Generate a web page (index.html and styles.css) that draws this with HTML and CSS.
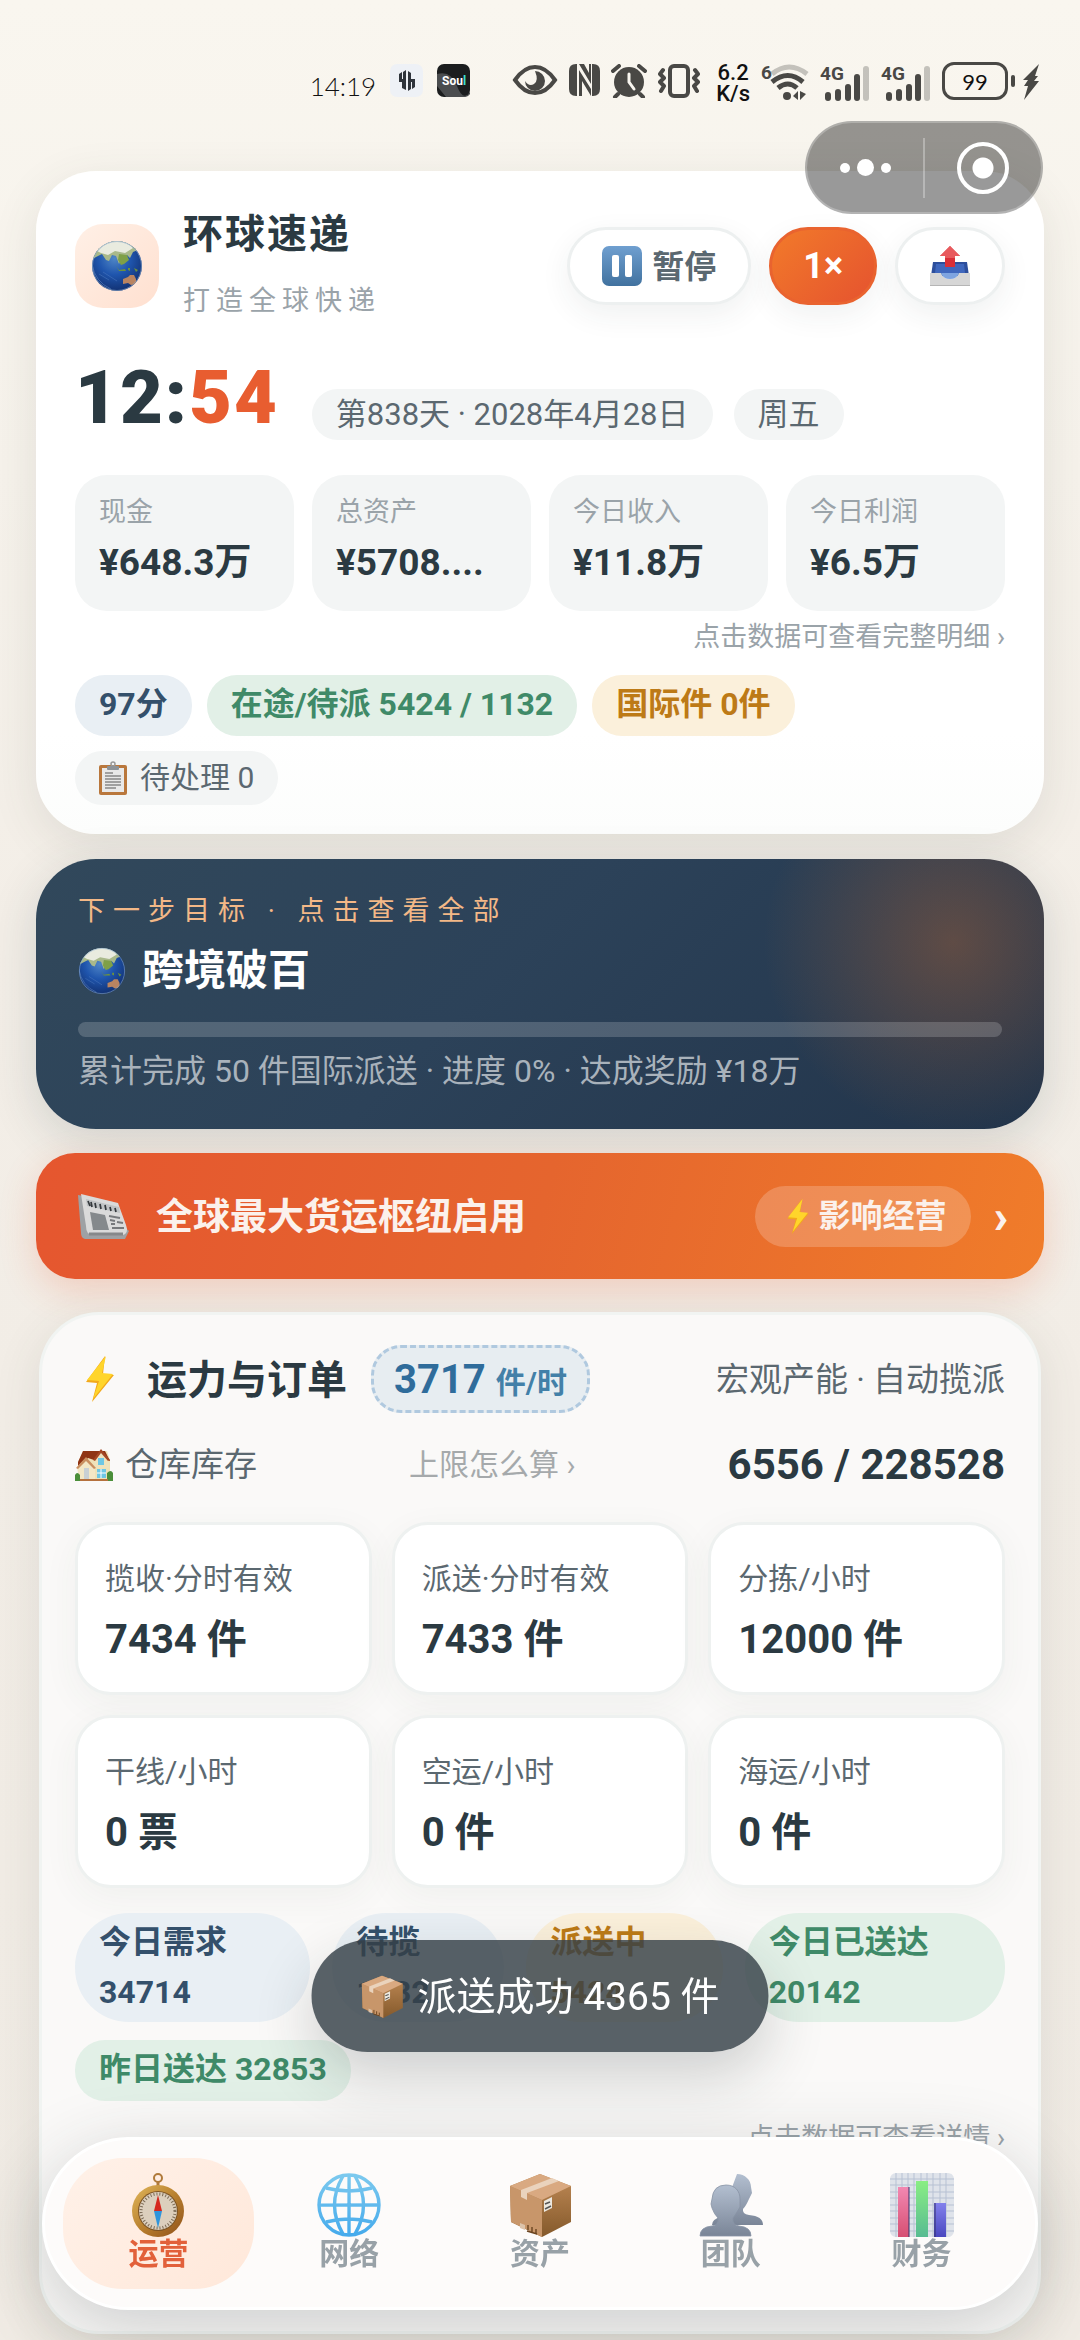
FILE: index.html
```html
<!DOCTYPE html>
<html lang="zh-CN">
<head>
    <meta charset="UTF-8">
    <meta name="viewport" content="width=device-width, initial-scale=1">
    <title>环球速递</title>
    <link rel="stylesheet" href="styles.css">
</head>
<body>
    <svg class="sprite" aria-hidden="true">
        <defs>
            <radialGradient id="sea" cx=".45" cy=".35" r=".65">
                <stop offset="0" stop-color="#4f86c6"/>
                <stop offset=".5" stop-color="#1f55ad"/>
                <stop offset="1" stop-color="#123274"/>
            </radialGradient>
            <linearGradient id="gold" x1="0" y1="0" x2="1" y2="1">
                <stop offset="0" stop-color="#e2b85c"/>
                <stop offset=".5" stop-color="#b9812f"/>
                <stop offset="1" stop-color="#8f501a"/>
            </linearGradient>
            <linearGradient id="sky" x1="0" y1="0" x2="0" y2="1">
                <stop offset="0" stop-color="#7cc9ee"/>
                <stop offset="1" stop-color="#46abec"/>
            </linearGradient>
            <linearGradient id="boxside" x1="0" y1="0" x2="0" y2="1">
                <stop offset="0" stop-color="#c08a56"/>
                <stop offset="1" stop-color="#84592b"/>
            </linearGradient>
            <linearGradient id="person" x1="0" y1="0" x2="0" y2="1">
                <stop offset="0" stop-color="#b3bfd0"/>
                <stop offset="1" stop-color="#7a8597"/>
            </linearGradient>
            <linearGradient id="red" x1="0" y1="0" x2="0" y2="1">
                <stop offset="0" stop-color="#f288b2"/>
                <stop offset="1" stop-color="#d64f72"/>
            </linearGradient>
            <linearGradient id="green" x1="0" y1="0" x2="0" y2="1">
                <stop offset="0" stop-color="#8aee84"/>
                <stop offset="1" stop-color="#57bb92"/>
            </linearGradient>
            <linearGradient id="violet" x1="0" y1="0" x2="0" y2="1">
                <stop offset="0" stop-color="#8280ec"/>
                <stop offset="1" stop-color="#4a48c0"/>
            </linearGradient>
            <linearGradient id="pausebg" x1="0" y1="0" x2="0" y2="1">
                <stop offset="0" stop-color="#6f9fd0"/>
                <stop offset="1" stop-color="#41729f"/>
            </linearGradient>
            <clipPath id="disc"><circle cx="26" cy="26" r="25"/></clipPath>
        </defs>

        <symbol id="earth" viewBox="0 0 52 52">
            <circle cx="26" cy="26" r="25" fill="url(#sea)"/>
            <g clip-path="url(#disc)">
                <path d="M0 10 Q8 0 26 0 Q44 1 47 10 L42 12 39 18 36 15 34 21 31 17 28 24 25 16 21 15 18 21 15 20 11 14 5 17 0 20z" fill="#a9b98a"/>
                <path d="M6 11 Q14 0 28 1 Q38 2 42 8 L34 13 24 11 17 15 10 13z" fill="#e9ebdf"/>
                <path d="M28 14l8 1 2 5-5 4-3 1-3-5z" fill="#7fa047"/>
                <path d="M25 26l3 4 6-1 1 2-7 0z M37 28l2 0 0 3-2-1z M43 28l4 2-2 2z" fill="#6b9040"/>
                <path d="M32 39l5-2 2-2 4 0 2 4 0 5-5 1-3-2-5 1z" fill="#b98461"/>
                <path d="M1 24 Q4 42 20 49" stroke="#5a82c0" stroke-width="1" fill="none" opacity=".6"/>
                <path d="M8 34l10 6M12 32l14 9" stroke="#527fc4" stroke-width=".8" fill="none" opacity=".6"/>
            </g>
            <circle cx="26" cy="26" r="24.5" fill="none" stroke="#8aa9c8" stroke-width="1" opacity=".6"/>
        </symbol>

        <symbol id="bolt" viewBox="0 0 30 46">
            <path d="M20 0L1 26l11 1-5 19L29 19l-11-1z" fill="#f2a91b"/>
            <path d="M21 0L2 24l12 1-6 18L28 18l-11-1z" fill="#ffd52b"/>
        </symbol>

        <symbol id="box" viewBox="0 0 64 64">
            <path d="M2 13L32 1l31 12v36L34 64 3 49z" fill="url(#boxside)"/>
            <path d="M2 13l32 14v37L3 49z" fill="#c8966a"/>
            <path d="M2 13L32 1l31 12-29 14z" fill="#d9a981"/>
            <path d="M13 17L44 5l7 3-32 12v7l-6-3z" fill="#ead3bd"/>
            <path d="M12 50l5 2v5l-5-2z" fill="#dcc3aa"/>
            <path d="M36 28l8-4v11l-8 4z" fill="#ece8df"/>
            <path d="M37 31l5-2M37 36l6-3" stroke="#555" stroke-width="1.5"/>
            <path d="M20 52v5M24 54v5M28 56v4M19 58l10 3" stroke="#6a4420" stroke-width="1.4"/>
        </symbol>

        <symbol id="pause" viewBox="0 0 40 40">
            <rect width="40" height="40" rx="7" fill="url(#pausebg)"/>
            <rect x="10" y="9" width="7" height="22" rx="2" fill="#fff"/>
            <rect x="23" y="9" width="7" height="22" rx="2" fill="#fff"/>
        </symbol>

        <symbol id="outbox" viewBox="0 0 40 40">
            <path d="M3 16h34l2 14H1z" fill="#2d4f9c"/>
            <path d="M6 18h28l1 9H5z" fill="#3f67bd"/>
            <path d="M0 27h11q2 6 9 6t9-6h11v13H0z" fill="#d6d6d6"/>
            <path d="M11 27h18q-2 6-9 6t-9-6z" fill="#7ea4e0"/>
            <path d="M0 39h40v1H0z" fill="#b5b5b5"/>
            <path d="M20 0l10 10h-5v11H15V10h-5z" fill="#d92f38"/>
            <path d="M20 0l10 10h-5v2H15v-2h-5z" fill="#e85a5e"/>
        </symbol>

        <symbol id="clipboard" viewBox="0 0 28 34">
            <rect x="0" y="4" width="28" height="30" rx="2" fill="#b9773c"/>
            <rect x="3" y="7" width="22" height="24" fill="#e9e9e9"/>
            <circle cx="14" cy="3" r="2" fill="none" stroke="#999" stroke-width="1.5"/>
            <rect x="8" y="5" width="12" height="4" rx="1" fill="#8d9398"/>
            <path d="M6 12h8M6 15h16M6 18h16M6 21h16M6 24h16M6 27h11" stroke="#888" stroke-width="1.3"/>
        </symbol>

        <symbol id="news" viewBox="0 0 52 46">
            <path d="M1 2L36 9l6 20 10 9-4 8H8Q4 45 4 40z" fill="#9ea1a4"/>
            <path d="M4 1l37 9 8 22q3 8-3 10H16q-7 0-7-9z" fill="#dadada"/>
            <path d="M9 6l33 8 1 6L10 13z" fill="#bfc2c4"/>
            <path d="M11 8l2 5M14 9l1 5M18 10l1 5M23 11l1 5M28 12l1 5M33 14l1 4M38 15l1 4" stroke="#34383c" stroke-width="1.7"/>
            <path d="M13 19l15 3 4 15H16z" fill="#85898c"/>
            <path d="M32 23l11 2M33 27l5 1M34 31l4 0M35 35l12 0M40 29l6 1" stroke="#77797c" stroke-width="1.8"/>
            <path d="M12 41h34" stroke="#86888a" stroke-width="3"/>
        </symbol>

        <symbol id="house" viewBox="0 0 38 32">
            <path d="M3 13L8 2h24l3 9v19H4z" fill="#efe2b8"/>
            <path d="M3 13L8 2h22l5 10H22L13 9 3 19z" fill="#8f3414"/>
            <path d="M19 11l7-10 8 10v8H20z" fill="#f0e3bc"/>
            <path d="M18 11l8-11 9 11-2 1-7-8-6 8z" fill="#a54724"/>
            <path d="M2 18l9-9 9 9v12H4z" fill="#f3e7c6"/>
            <path d="M1 19l10-11 10 11-2 1-8-8-8 8z" fill="#c98f60"/>
            <rect x="23" y="9" width="6" height="7" fill="#6fc7e4"/>
            <rect x="22" y="20" width="9" height="9" fill="#6fc7e4"/>
            <rect x="9" y="19" width="5" height="11" fill="#c9d0d4"/>
            <path d="M26 20v9M22 24h9" stroke="#fff" stroke-width="1"/>
            <path d="M0 32v-6q2-4 5 0v4h27v-6q4-4 6 0v8z" fill="#4b8f3a"/>
            <path d="M5 30h28v2H5z" fill="#b5713e"/>
        </symbol>

        <symbol id="compass" viewBox="0 0 64 64">
            <circle cx="32" cy="5" r="4" fill="none" stroke="#b07a3a" stroke-width="2"/>
            <path d="M32 9v4" stroke="#b07a3a" stroke-width="3"/>
            <circle cx="32" cy="38" r="26" fill="url(#gold)"/>
            <circle cx="32" cy="38" r="20" fill="#7d5424"/>
            <circle cx="32" cy="38" r="19" fill="#dccfbd"/>
            <circle cx="32" cy="38" r="17" fill="none" stroke="#7b6a55" stroke-width="3" stroke-dasharray="1 2"/>
            <path d="M32 22l4 16h-8z" fill="#d5281f"/>
            <path d="M32 55l4-17h-8z" fill="#2f95dc"/>
        </symbol>

        <symbol id="globe" viewBox="0 0 64 64">
            <g fill="none" stroke="url(#sky)" stroke-width="3.4">
                <circle cx="32" cy="32" r="30"/>
                <path d="M32.1 2L32 62M2 32.1L62 32M9 15q23 6 46 0M9 49q23-6 46 0"/>
                <path d="M26 3Q9 32 26 61M38 3Q55 32 38 61"/>
            </g>
        </symbol>

        <symbol id="team" viewBox="0 0 64 64">
            <path d="M38 1c8 0 14 6 14 13l1 6-3 6q-3 7-6 10-1 5 6 6 14 1 14 10H13q0-6 9-8z" fill="url(#person)"/>
            <path d="M27 12c9 0 14 6 14 14l0 8q-4 7-7 11-1 7 6 8 12 1 12 10H1q0-9 12-10 7-1 6-8-4-4-6-10l-1-4 1-5q1-14 14-14z" fill="url(#person)" stroke="#8893a4" stroke-width=".8"/>
        </symbol>

        <symbol id="chart" viewBox="0 0 64 64">
            <rect width="64" height="64" rx="6" fill="#dfe3ea"/>
            <path d="M6 0v64M12 0v64M18 0v64M24 0v64M31 0v64M37 0v64M43 0v64M50 0v64M56 0v64M0 6h64M0 12h64M0 19h64M0 25h64M0 32h64M0 38h64M0 45h64M0 51h64M0 58h64" stroke="#b7c1d3" stroke-width="1"/>
            <rect x="8" y="14" width="11" height="50" fill="url(#red)"/>
            <rect x="26" y="8" width="12" height="56" fill="url(#green)"/>
            <rect x="44" y="30" width="12" height="34" fill="url(#violet)"/>
            <path d="M45 30v34M19 14v50" stroke="#33306a" stroke-width="1"/>
        </symbol>

        <symbol id="signal" viewBox="0 0 50 37">
            <g fill="#494845">
                <rect x="5" y="28" width="6" height="9" rx="3"/>
                <rect x="15" y="25" width="6" height="12" rx="3"/>
                <rect x="25" y="20" width="6" height="17" rx="3"/>
                <rect x="34" y="10" width="6" height="27" rx="3"/>
                <rect x="43" y="2" width="6" height="35" rx="3" opacity=".3"/>
            </g>
        </symbol>
    </svg>

    <div class="statusbar">
        <span class="st-time">14:19</span>
        <svg class="st-app" viewBox="0 0 33 33">
            <rect width="33" height="33" rx="7" fill="#eef1f6"/>
            <path d="M16 6v20l-4-2v-6h-3V10l3-2v7h1V8zM18 27V7l3 2v6h4v8l-3 2v-7h-1v7z" fill="#2f343b"/>
        </svg>
        <svg class="st-app" viewBox="0 0 33 33">
            <rect width="33" height="33" rx="7" fill="#1b1d1e"/>
            <path d="M0 10Q14 6 20 22T33 28v2q-2 3-6 3H9L0 22z" fill="#4b4d4f"/>
            <text x="5" y="21" class="soul">Sou<tspan fill="#3fe0d0">l</tspan></text>
        </svg>
        <span class="st-gap"></span>
        <svg width="46" height="32" viewBox="0 0 46 32">
            <path d="M3 16Q12 3 23 3t20 13Q34 29 23 29T3 16z" fill="none" stroke="#494845" stroke-width="4"/>
            <path d="M23 7a10 10 0 1 1-10 10q4 6 9 3t1-13z" fill="#494845"/>
        </svg>
        <svg width="31" height="32" viewBox="0 0 31 32">
            <path d="M7 0q-7 0-7 7v18q0 7 7 7h1V0zM24 32q7 0 7-7V7q0-7-7-7h-1v32z" fill="#494845"/>
            <path d="M10 0l12 20V0h-2v9L15 0zM10 6l12 19v7l-9-15v15h-3z" fill="#494845"/>
        </svg>
        <svg width="36" height="34" viewBox="0 0 36 34">
            <circle cx="18" cy="18" r="15" fill="#494845"/>
            <path d="M2 7l6-5M34 7l-6-5M7 30l-3 3M29 30l3 3" stroke="#494845" stroke-width="4" stroke-linecap="round"/>
            <path d="M18 10v8l5 7" stroke="#f8f5ef" stroke-width="3" fill="none" stroke-linecap="round"/>
        </svg>
        <svg width="42" height="34" viewBox="0 0 42 34">
            <rect x="12" y="2" width="18" height="30" rx="4" fill="none" stroke="#494845" stroke-width="4"/>
            <path d="M5 6l-3 4 4 4-4 4 4 4-3 5M37 6l3 4-4 4 4 4-4 4 3 5" fill="none" stroke="#494845" stroke-width="4" stroke-linecap="round" stroke-linejoin="round"/>
        </svg>
        <span class="st-speed"><span>6.2</span><span>K/s</span></span>
        <svg width="48" height="37" viewBox="0 0 48 37">
            <text x="0" y="15" class="sig-text">6</text>
            <g fill="none" stroke="#494845" stroke-width="5">
                <path d="M11 10q17-14 35 0" opacity=".3"/>
                <path d="M11 18q16-13 31 0"/>
                <path d="M17 24q10-8 19 0"/>
            </g>
            <circle cx="26" cy="32" r="4" fill="#494845"/>
            <path d="M32 32l5-5v9zM45 30l-6 6v-9z" fill="#494845"/>
        </svg>
        <svg width="50" height="37"><use href="#signal"/><text x="0" y="16" class="sig-text">4G</text></svg>
        <svg width="50" height="37"><use href="#signal"/><text x="0" y="16" class="sig-text">4G</text></svg>
        <span class="battery">99</span>
        <svg class="charge" width="18" height="36" viewBox="0 0 18 36">
            <path d="M17 0L1 16h5l-4 6h4L2 36 17 17h-5l4-5h-3z" fill="#494845"/>
        </svg>
    </div>

    <div class="capsule">
        <button type="button" aria-label="更多"><i class="dot"></i><i class="dot big"></i><i class="dot"></i></button>
        <span class="capsule-line"></span>
        <button type="button" aria-label="关闭"><i class="ring"></i></button>
    </div>

    <main>
        <section class="card hero">
            <header class="top">
                <div class="logo"><svg width="52" height="52"><use href="#earth"/></svg></div>
                <div class="name">
                    <h1>环球速递</h1>
                    <p>打造全球快递</p>
                </div>
                <div class="actions">
                    <button type="button" class="btn btn-pause"><svg width="40" height="40"><use href="#pause"/></svg><span>暂停</span></button>
                    <button type="button" class="btn btn-speed">1×</button>
                    <button type="button" class="btn btn-share" aria-label="导出"><svg width="40" height="40"><use href="#outbox"/></svg></button>
                </div>
            </header>

            <div class="clock">
                <span class="time">12:<b>54</b></span>
                <span class="date">第838天 · 2028年4月28日</span>
                <span class="date">周五</span>
            </div>

            <div class="stats">
                <div class="stat"><span>现金</span><strong>¥648.3万</strong></div>
                <div class="stat"><span>总资产</span><strong>¥5708....</strong></div>
                <div class="stat"><span>今日收入</span><strong>¥11.8万</strong></div>
                <div class="stat"><span>今日利润</span><strong>¥6.5万</strong></div>
            </div>
            <a href="#" class="hint">点击数据可查看完整明细 ›</a>

            <div class="chips">
                <span class="chip blue">97分</span>
                <span class="chip green">在途/待派 5424 / 1132</span>
                <span class="chip amber">国际件 0件</span>
            </div>
            <div class="pending">
                <span class="chip todo"><svg width="28" height="34"><use href="#clipboard"/></svg>待处理 0</span>
            </div>
        </section>

        <section class="goal">
            <p class="goal-label">下一步目标 · 点击查看全部</p>
            <h2><svg width="48" height="48"><use href="#earth"/></svg>跨境破百</h2>
            <progress value="0" max="100" aria-label="目标进度"></progress>
            <p class="goal-info">累计完成 50 件国际派送 · 进度 0% · 达成奖励 ¥18万</p>
        </section>

        <a href="#" class="news">
            <svg width="52" height="46"><use href="#news"/></svg>
            <span class="news-title">全球最大货运枢纽启用</span>
            <span class="news-tag"><svg width="24" height="35"><use href="#bolt"/></svg>影响经营</span>
            <span class="news-arrow">›</span>
        </a>

        <section class="card orders">
            <header class="orders-head">
                <svg width="30" height="46"><use href="#bolt"/></svg>
                <h2>运力与订单</h2>
                <button type="button" class="rate">3717 <small>件/时</small></button>
                <span class="orders-sub">宏观产能 · 自动揽派</span>
            </header>
            <div class="stock">
                <span class="stock-name"><svg width="38" height="32"><use href="#house"/></svg>仓库库存</span>
                <a href="#">上限怎么算 ›</a>
                <strong>6556 / 228528</strong>
            </div>

            <div class="tiles">
                <div class="tile"><span>揽收·分时有效</span><strong>7434 件</strong></div>
                <div class="tile"><span>派送·分时有效</span><strong>7433 件</strong></div>
                <div class="tile"><span>分拣/小时</span><strong>12000 件</strong></div>
                <div class="tile"><span>干线/小时</span><strong>0 票</strong></div>
                <div class="tile"><span>空运/小时</span><strong>0 件</strong></div>
                <div class="tile"><span>海运/小时</span><strong>0 件</strong></div>
            </div>

            <div class="flow">
                <span class="chip blue">今日需求<br>34714</span>
                <span class="chip blue">待揽<br>1132</span>
                <span class="chip amber">派送中<br>5424</span>
                <span class="chip green">今日已送达<br>20142</span>
            </div>
            <div class="yesterday"><span class="chip green">昨日送达 32853</span></div>
            <a href="#" class="hint">点击数据可查看详情 ›</a>
        </section>
    </main>

    <div class="toast" role="status"><svg width="43" height="43"><use href="#box"/></svg><span>派送成功 4365 件</span></div>

    <nav class="tabbar">
        <a href="#" class="active"><svg width="64" height="64"><use href="#compass"/></svg>运营</a>
        <a href="#"><svg width="64" height="64"><use href="#globe"/></svg>网络</a>
        <a href="#"><svg width="64" height="64"><use href="#box"/></svg>资产</a>
        <a href="#"><svg width="64" height="64"><use href="#team"/></svg>团队</a>
        <a href="#"><svg width="64" height="64"><use href="#chart"/></svg>财务</a>
    </nav>
</body>
</html>
```
FILE: styles.css
```css
*{
    box-sizing: border-box;
}
body{
    margin: 0;
    min-height: 100vh;
    background: linear-gradient(180deg, #f9f6ef 0%, #f3eee7 40%, #f0ebe4 100%);
    color: #2b3a42;
    font-family: Roboto, "Noto Sans CJK SC", sans-serif;
    font-size: 30px;
}
h1, h2, p{
    margin: 0;
}
a{
    color: inherit;
    text-decoration: none;
}
button{
    font-family: inherit;
    cursor: pointer;
}
svg{
    flex: none;
    display: block;
}
.sprite{
    position: absolute;
    width: 0;
    height: 0;
}

/* status bar */
.statusbar{
    display: flex;
    align-items: flex-start;
    justify-content: flex-end;
    gap: 11px;
    height: 171px;
    padding: 62px 40px 0 0;
}
.statusbar > svg{
    margin-top: 2px;
}
.st-time{
    color: #111;
    font-family: Lato, sans-serif;
    font-size: 26px;
    font-weight: 300;
    line-height: 48px;
}
.st-app{
    width: 33px;
    height: 33px;
    margin-left: 3px;
}
.soul{
    font: bold 12px Roboto, sans-serif;
    fill: #fff;
}
.st-gap{
    width: 20px;
}
.st-speed{
    display: flex;
    flex-direction: column;
    color: #111;
    font-size: 22px;
    line-height: 21px;
    text-align: center;
    font-weight: 500;
    margin-left: 5px;
}
.sig-text{
    font: bold 19px Roboto, sans-serif;
    fill: #494845;
}
.battery{
    position: relative;
    width: 66px;
    height: 38px;
    border: 3px solid #494845;
    border-radius: 12px;
    color: #111;
    font-family: Lato, sans-serif;
    font-size: 22px;
    line-height: 34px;
    text-align: center;
}
.battery::after{
    content: "";
    position: absolute;
    right: -10px;
    top: 10px;
    width: 4px;
    height: 12px;
    border-radius: 2px;
    background: #494845;
}
.charge{
    margin-left: 3px;
}

.capsule{
    position: absolute;
    top: 121px;
    right: 37px;
    z-index: 5;
    display: flex;
    align-items: center;
    width: 238px;
    height: 93px;
    border: 2px solid rgba(255, 255, 255, .25);
    border-radius: 47px;
    background: rgba(0, 0, 0, .4);
}
.capsule button{
    flex: 1;
    display: flex;
    align-items: center;
    justify-content: center;
    gap: 7px;
    height: 100%;
    padding: 0;
    border: 0;
    background: none;
}
.capsule-line{
    width: 2px;
    height: 60px;
    background: rgba(255, 255, 255, .3);
}
.dot{
    width: 10px;
    height: 10px;
    border-radius: 50%;
    background: #fff;
}
.dot.big{
    width: 17px;
    height: 17px;
}
.ring{
    width: 52px;
    height: 52px;
    border: 4px solid #fff;
    border-radius: 50%;
    background: radial-gradient(circle, #fff 10px, transparent 11px);
}

main{
    padding: 0 36px 6px;
}
.card{
    border-radius: 60px;
    box-shadow: 0 12px 48px rgba(60, 70, 60, .11);
}

/* top card */
.hero{
    padding: 34px 39px 29px;
    background: linear-gradient(180deg, #fff 85%, #fcfdfc);
}
.top{
    display: flex;
    align-items: center;
}
.logo{
    display: flex;
    align-items: center;
    justify-content: center;
    width: 84px;
    height: 84px;
    border-radius: 28px;
    background: linear-gradient(135deg, #fff0e6, #ffe0d0);
}
.name{
    display: flex;
    flex-direction: column;
    gap: 14px;
    flex: 1;
    margin-left: 24px;
    padding-top: 4px;
}
.name h1{
    font-size: 40px;
    line-height: 52px;
    letter-spacing: 2px;
}
.name p{
    color: #9aa3a9;
    font-size: 27px;
    line-height: 52px;
    letter-spacing: 6px;
}
.actions{
    display: flex;
    gap: 18px;
}
.btn{
    display: flex;
    align-items: center;
    justify-content: center;
    gap: 10px;
    height: 78px;
    padding: 0 32px;
    border: 3px solid #edf0f0;
    border-radius: 39px;
    background: #fff;
    box-shadow: 0 10px 30px rgba(40, 50, 60, .07);
    color: #5b6870;
    font-size: 32px;
    font-weight: bold;
}
.btn-pause span{
    padding-bottom: 4px;
}
.btn-speed{
    padding: 0 31px;
    border-color: #e9632f;
    background: linear-gradient(135deg, #f27a2a, #e5532f);
    color: #fff;
    font-size: 36px;
}
.clock{
    display: flex;
    align-items: flex-end;
    gap: 21px;
    margin-top: 29px;
}
.time{
    margin-right: 12px;
    font-size: 74px;
    font-weight: 900;
    line-height: 84px;
    letter-spacing: 2px;
}
.time b{
    color: #e85d30;
    font-weight: 900;
}
.date{
    padding: 0 24px;
    border-radius: 26px;
    background: #f3f5f5;
    color: #5b6870;
    font-size: 31px;
    line-height: 51px;
}
.stats{
    display: grid;
    grid-template-columns: repeat(4, 1fr);
    gap: 18px;
    margin-top: 35px;
}
.stat{
    min-width: 0;
    padding: 18px 24px 24px;
    border-radius: 32px;
    background: #f3f5f5;
}
.stat span{
    display: block;
    color: #9aa3a9;
    font-size: 27px;
    line-height: 38px;
}
.stat strong{
    display: block;
    margin-top: 8px;
    overflow: hidden;
    font-size: 37px;
    line-height: 48px;
    white-space: nowrap;
    text-overflow: ellipsis;
}
.hint{
    display: block;
    margin-top: 6px;
    color: #9aa3a9;
    font-size: 27px;
    line-height: 40px;
    text-align: right;
}
.chips{
    display: flex;
    flex-wrap: wrap;
    gap: 15px;
    margin-top: 18px;
}
.chip{
    padding: 4px 24px 7px;
    border-radius: 30px;
    font-size: 32px;
    font-weight: bold;
    line-height: 50px;
}
.blue{
    background: #e9eff4;
    color: #34506b;
}
.green{
    background: #e2f0e7;
    color: #3f8a68;
}
.amber{
    background: #fbf0db;
    color: #bd7a16;
}
.pending{
    display: flex;
    margin-top: 15px;
}
.todo{
    display: flex;
    align-items: center;
    gap: 13px;
    padding: 2px 24px;
    background: #f3f5f5;
    color: #5b6870;
    font-size: 30px;
    font-weight: normal;
}

/* next goal */
.goal{
    margin-top: 25px;
    padding: 32px 42px 35px;
    border-radius: 60px;
    background: radial-gradient(circle at 91% 31%, rgba(242, 122, 42, .28), rgba(242, 122, 42, 0) 190px), linear-gradient(135deg, #31485b 0%, #2c4259 45%, #22344a 100%);
    box-shadow: 0 12px 48px rgba(40, 60, 70, .16);
    color: #fff;
}
.goal-label{
    color: #f3b887;
    font-size: 27px;
    line-height: 40px;
    letter-spacing: 8px;
}
.goal h2{
    display: flex;
    align-items: center;
    gap: 16px;
    margin-top: 10px;
    font-size: 42px;
    line-height: 60px;
}
.goal progress{
    display: block;
    width: 100%;
    height: 15px;
    margin-top: 21px;
    border: 0;
    border-radius: 8px;
    overflow: hidden;
    background: rgba(255, 255, 255, .18);
    -webkit-appearance: none;
    appearance: none;
}
.goal progress::-webkit-progress-bar{
    background: transparent;
}
.goal progress::-webkit-progress-value{
    background: #f27a2a;
}
.goal-info{
    margin-top: 11px;
    color: #a9b2bb;
    font-size: 32px;
    line-height: 46px;
}

/* news banner */
.news{
    display: flex;
    align-items: center;
    height: 126px;
    margin-top: 24px;
    padding: 0 36px 0 41px;
    border-radius: 39px;
    background: linear-gradient(105deg, #e5562f 0%, #e5652e 50%, #f07c2a 100%);
    box-shadow: 0 12px 36px rgba(232, 93, 48, .22);
    color: #fbf1ec;
    font-weight: bold;
}
.news-title{
    flex: 1;
    margin-left: 27px;
    padding-bottom: 4px;
    font-size: 37px;
}
.news-tag{
    display: flex;
    align-items: center;
    gap: 8px;
    padding: 0 25px 0 31px;
    border-radius: 31px;
    background: rgba(255, 255, 255, .2);
    font-size: 32px;
    line-height: 61px;
}
.news-arrow{
    margin-left: 22px;
    font-size: 48px;
    font-weight: 900;
}

/* orders card */
.orders{
    margin: 33px 3px 0;
    padding: 30px 33px 173px;
    border: 3px solid rgba(240, 243, 241, .9);
    background: #faf9f8;
}
.orders-head{
    display: flex;
    align-items: center;
    padding-left: 10px;
}
.orders-head h2{
    margin: 0 24px 0 32px;
    padding-bottom: 4px;
    font-size: 40px;
}
.rate{
    height: 68px;
    padding: 0 20px;
    border: 3px dashed #b0c9df;
    border-radius: 30px;
    background: #e7edf1;
    color: #2f6c9b;
    font-size: 40px;
    font-weight: bold;
}
.rate small{
    color: #4380a8;
    font-size: 30px;
}
.orders-sub{
    margin-left: auto;
    padding-bottom: 4px;
    color: #5b6870;
    font-size: 33px;
}
.stock{
    display: flex;
    align-items: center;
    justify-content: space-between;
    margin-top: 22px;
    line-height: 60px;
}
.stock-name{
    display: flex;
    align-items: center;
    gap: 12px;
    color: #5b6870;
    font-size: 33px;
}
.stock a{
    color: #a5a9ab;
    font-size: 30px;
}
.stock strong{
    font-size: 42px;
}
.tiles{
    display: grid;
    grid-template-columns: repeat(3, 1fr);
    gap: 20px;
    margin-top: 27px;
}
.tile{
    padding: 32px 27px 25px;
    border: 3px solid #eef1f0;
    border-radius: 36px;
    background: #fff;
    box-shadow: 0 10px 36px rgba(60, 70, 60, .05);
}
.tile span{
    display: block;
    color: #5b6870;
    font-size: 30px;
    line-height: 44px;
}
.tile strong{
    display: block;
    margin-top: 12px;
    font-size: 40px;
    line-height: 54px;
}
.flow{
    display: grid;
    grid-template-columns: 235fr 172fr 196fr 260fr;
    gap: 22px;
    margin-top: 25px;
}
.flow .chip{
    padding-bottom: 5px;
    border-radius: 54px;
}
.yesterday{
    display: flex;
    margin-top: 18px;
}
.orders .hint{
    margin-top: 17px;
}

.toast{
    position: fixed;
    left: 50%;
    bottom: 288px;
    z-index: 10;
    display: flex;
    align-items: center;
    gap: 14px;
    height: 112px;
    padding: 0 49px;
    border-radius: 56px;
    background: rgba(52, 64, 71, .82);
    box-shadow: 0 24px 60px rgba(30, 40, 40, .2);
    color: #fff;
    font-size: 39px;
    white-space: nowrap;
    transform: translateX(-50%);
}
.toast span{
    padding-bottom: 6px;
}

/* bottom tabs */
.tabbar{
    position: fixed;
    left: 42px;
    right: 42px;
    bottom: 30px;
    z-index: 8;
    display: flex;
    height: 173px;
    padding: 18px;
    border: 3px solid #fff;
    border-radius: 87px;
    background: #fdfbfa;
    box-shadow: 0 18px 72px rgba(40, 50, 50, .22);
}
.tabbar a{
    flex: 1;
    display: flex;
    flex-direction: column;
    align-items: center;
    padding-top: 15px;
    border-radius: 60px;
    color: #98a1a7;
    font-size: 30px;
    font-weight: bold;
    line-height: 34px;
}
.tabbar .active{
    background: linear-gradient(135deg, #fff1e8, #ffe8da);
    color: #e2603a;
}
```
